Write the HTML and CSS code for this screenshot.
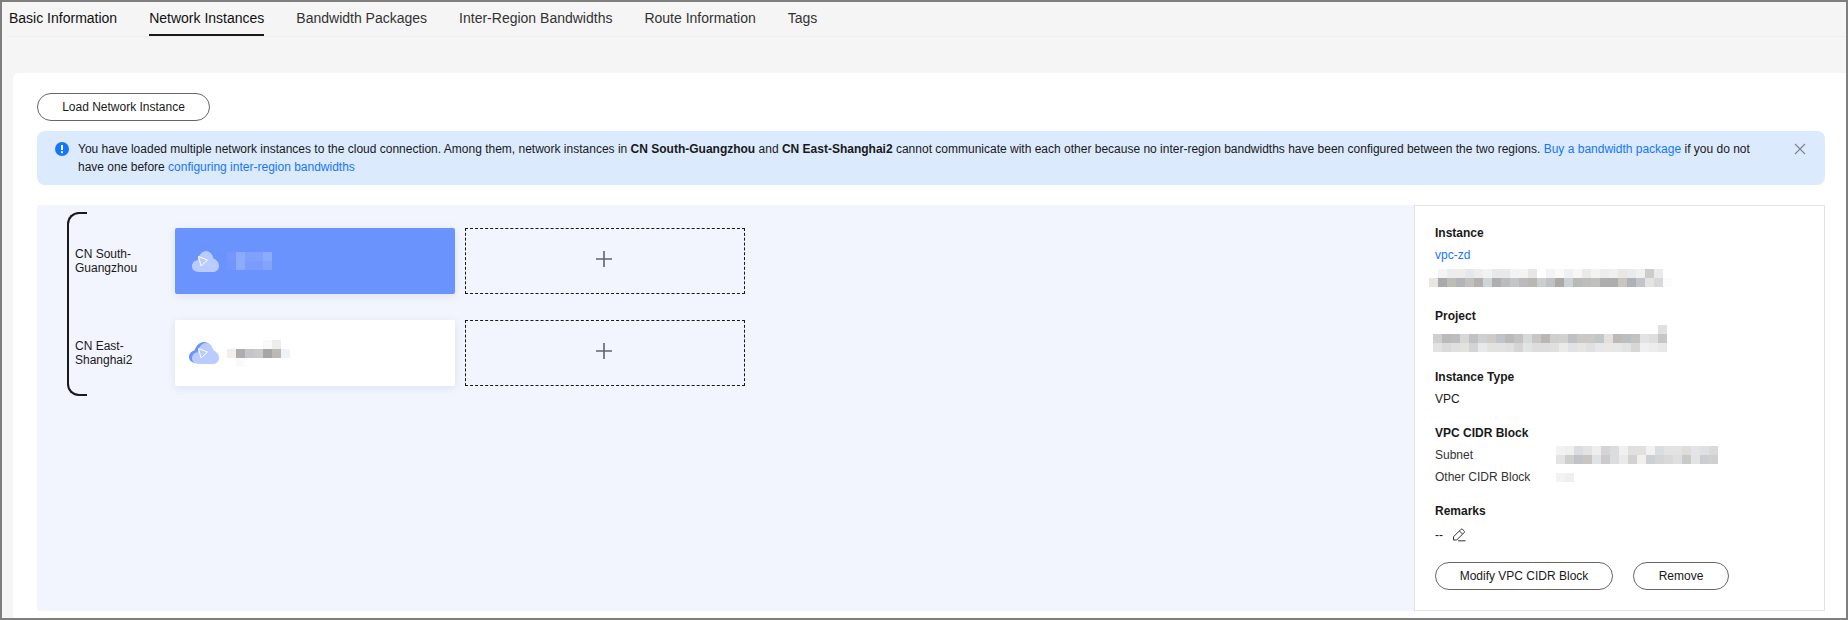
FILE: index.html
```html
<!DOCTYPE html>
<html lang="en">
<head>
<meta charset="utf-8">
<title>Cloud Connection</title>
<link rel="stylesheet" href="styles.css">
</head>
<body>
<div class="frame">
  <nav class="tabs">
    <span class="tab">Basic Information</span>
    <span class="tab active">Network Instances</span>
    <span class="tab">Bandwidth Packages</span>
    <span class="tab">Inter-Region Bandwidths</span>
    <span class="tab">Route Information</span>
    <span class="tab">Tags</span>
  </nav>
  <section class="card">
    <button class="btn btn-load">Load Network Instance</button>
    <div class="alert">
      <svg class="alert-icon" viewBox="0 0 14 14"><circle cx="7" cy="7" r="7" fill="#1476ff"/><rect x="6" y="3" width="2" height="5" fill="#fff"/><rect x="6" y="9.2" width="2" height="2" fill="#fff"/></svg>
      <p class="alert-text">You have loaded multiple network instances to the cloud connection. Among them, network instances in <b>CN South-Guangzhou</b> and <b>CN East-Shanghai2</b> cannot communicate with each other because no inter-region bandwidths have been configured between the two regions. <a class="link">Buy a bandwidth package</a> if you do not have one before <a class="link">configuring inter-region bandwidths</a></p>
      <svg class="alert-close" viewBox="0 0 12 12"><path d="M1 1l10 10M11 1L1 11" stroke="#7d8594" stroke-width="1.2" fill="none"/></svg>
    </div>
    <div class="main">
      <div class="canvas">
        <div class="regions">
          <div class="bracket"></div>
          <div class="region">
            <div class="region-name">CN South-Guangzhou</div>
            <div class="instance selected">
              <svg class="cloud" viewBox="0 0 32 22"><path fill="#b9cbff" d="M9.500 22C5.500 22 3 19.500 3 16.300 3 13 5.500 10.500 8.500 10.300 9.500 6 12.500 1 17 1c4 0 6.500 3.500 7.500 7.500 3 1 5.500 4 5.500 7.500 0 3.300-2.500 6-6 6z"/><path fill="none" stroke="#fff" stroke-width="1" d="M9.500 6.500l9 3.500-6.500 6z"/></svg>
              <svg class="mosaic" width="45" height="18" shape-rendering="crispEdges"><rect width="9" height="9" fill="#7597fd"/><rect x="9" width="9" height="9" fill="#8dabfd"/><rect x="18" width="9" height="9" fill="#80a0fd"/><rect x="27" width="9" height="9" fill="#80a0fd"/><rect x="36" width="9" height="9" fill="#8dabfd"/><rect y="9" width="9" height="9" fill="#7295fd"/><rect x="9" y="9" width="9" height="9" fill="#8dabfd"/><rect x="18" y="9" width="9" height="9" fill="#7c9cfd"/><rect x="27" y="9" width="9" height="9" fill="#7c9cfd"/><rect x="36" y="9" width="9" height="9" fill="#84a3fd"/></svg>
            </div>
            <div class="add"><svg class="plus" viewBox="0 0 16 16"><path d="M8 0v16M0 8h16" stroke="#5f6270" stroke-width="1.600" fill="none"/></svg></div>
          </div>
          <div class="region">
            <div class="region-name">CN East-Shanghai2</div>
            <div class="instance">
              <svg class="cloud" viewBox="0 0 32 22"><path fill="#6d93fb" d="M7 21C3 21 0 18.500 0 15c0-3.300 2.500-6 5.500-6.500C7 4 10.500 0 15 0c4 0 7 3 8 7H20L8 21z"/><path fill="#b9cbff" d="M9.500 22C5.500 22 3 19.500 3 16.300 3 13 5.500 10.500 8.500 10.300 9.500 6 12.500 1 17 1c4 0 6.500 3.500 7.500 7.500 3 1 5.500 4 5.500 7.500 0 3.300-2.500 6-6 6z"/><path fill="none" stroke="#fff" stroke-width="1" d="M9.500 6.500l9 3.500-6.500 6z"/></svg>
              <svg class="mosaic" width="63" height="27" shape-rendering="crispEdges"><rect x="36" width="9" height="9" fill="#f9f9f9"/><rect x="45" width="9" height="9" fill="#ececec"/><rect y="9" width="9" height="9" fill="#f2efeb"/><rect x="9" y="9" width="9" height="9" fill="#adadad"/><rect x="18" y="9" width="9" height="9" fill="#c4c5c9"/><rect x="27" y="9" width="9" height="9" fill="#c8c9cb"/><rect x="36" y="9" width="9" height="9" fill="#a7a6a4"/><rect x="45" y="9" width="9" height="9" fill="#bcb8b4"/><rect x="54" y="9" width="9" height="9" fill="#eff2f7"/><rect x="9" y="18" width="9" height="9" fill="#fafafa"/></svg>
            </div>
            <div class="add"><svg class="plus" viewBox="0 0 16 16"><path d="M8 0v16M0 8h16" stroke="#5f6270" stroke-width="1.600" fill="none"/></svg></div>
          </div>
        </div>
      </div>
      <aside class="panel">
        <h4 class="label">Instance</h4>
        <a class="link value-link">vpc-zd</a>
        <svg class="mosaic mosaic-id" width="243" height="18" shape-rendering="crispEdges"><g id="a"><rect x="9" width="9" height="9" fill="#f4f4f4"/><rect x="18" width="9" height="9" fill="#ebeceb"/><rect x="27" width="9" height="9" fill="#efedeb"/><rect x="36" width="9" height="9" fill="#e6e7e9"/><rect x="45" width="9" height="9" fill="#ededed"/><rect x="54" width="9" height="9" fill="#f2f3f1"/><rect x="63" width="9" height="9" fill="#e6e8ea"/><rect x="72" width="9" height="9" fill="#e8e9e9"/><rect x="81" width="9" height="9" fill="#f3f3f3"/><rect x="90" width="9" height="9" fill="#f5f4f2"/><rect x="99" width="9" height="9" fill="#e7e7e7"/><rect x="117" width="9" height="9" fill="#f3f3f3"/><rect x="126" width="9" height="9" fill="#faf9f7"/><rect x="135" width="9" height="9" fill="#eef0f2"/><rect x="144" width="9" height="9" fill="#f8f7f5"/><rect x="153" width="9" height="9" fill="#e9e9e9"/><rect x="162" width="9" height="9" fill="#f3f3f3"/><rect x="171" width="9" height="9" fill="#ececec"/><rect x="180" width="9" height="9" fill="#f0f0f0"/><rect x="189" width="9" height="9" fill="#e9e7e5"/><rect x="198" width="9" height="9" fill="#e9ebee"/><rect x="207" width="9" height="9" fill="#f0f0ee"/><rect x="216" width="9" height="9" fill="#cccccc"/><rect x="225" width="9" height="9" fill="#e8eaec"/></g><g><rect y="9" width="9" height="9" fill="#e9e5e1"/><rect x="9" y="9" width="9" height="9" fill="#a9a9ab"/><rect x="18" y="9" width="9" height="9" fill="#bdbdb8"/><rect x="27" y="9" width="9" height="9" fill="#b3b3ba"/><rect x="36" y="9" width="9" height="9" fill="#c0c0bd"/><rect x="45" y="9" width="9" height="9" fill="#b3b1ae"/><rect x="54" y="9" width="9" height="9" fill="#cfd4d6"/><rect x="63" y="9" width="9" height="9" fill="#aeaeb0"/><rect x="72" y="9" width="9" height="9" fill="#bbbbbd"/><rect x="81" y="9" width="9" height="9" fill="#c3c5c6"/><rect x="90" y="9" width="9" height="9" fill="#bababa"/><rect x="99" y="9" width="9" height="9" fill="#bab6b2"/><rect x="108" y="9" width="9" height="9" fill="#c9cecf"/><rect x="117" y="9" width="9" height="9" fill="#c0c1c5"/><rect x="126" y="9" width="9" height="9" fill="#acaaa7"/><rect x="135" y="9" width="9" height="9" fill="#ccd1d4"/><rect x="144" y="9" width="9" height="9" fill="#b9b9b7"/><rect x="153" y="9" width="9" height="9" fill="#bdbdbb"/><rect x="162" y="9" width="9" height="9" fill="#c0c1bf"/><rect x="171" y="9" width="9" height="9" fill="#adadad"/><rect x="180" y="9" width="9" height="9" fill="#adadad"/><rect x="189" y="9" width="9" height="9" fill="#c9c4c0"/><rect x="198" y="9" width="9" height="9" fill="#adb2b6"/><rect x="207" y="9" width="9" height="9" fill="#c3c3c9"/><rect x="216" y="9" width="9" height="9" fill="#e6e4e2"/><rect x="225" y="9" width="9" height="9" fill="#d8d8da"/><rect x="234" y="9" width="9" height="9" fill="#fbfbfb"/></g></svg>
        <h4 class="label label-project">Project</h4>
        <svg class="mosaic mosaic-project" width="234" height="27" shape-rendering="crispEdges"><rect x="225" width="9" height="9" fill="#e0e0e0"/><rect y="9" width="9" height="9" fill="#cfcfcf"/><rect x="9" y="9" width="9" height="9" fill="#bababa"/><rect x="18" y="9" width="9" height="9" fill="#bdbdbd"/><rect x="27" y="9" width="9" height="9" fill="#d7d7d7"/><rect x="36" y="9" width="9" height="9" fill="#bfc1c3"/><rect x="45" y="9" width="9" height="9" fill="#d0d0d2"/><rect x="54" y="9" width="9" height="9" fill="#cfcbc8"/><rect x="63" y="9" width="9" height="9" fill="#c0c4c9"/><rect x="72" y="9" width="9" height="9" fill="#bababa"/><rect x="81" y="9" width="9" height="9" fill="#c3c3c3"/><rect x="90" y="9" width="9" height="9" fill="#d8d9db"/><rect x="99" y="9" width="9" height="9" fill="#c9c7c5"/><rect x="108" y="9" width="9" height="9" fill="#b9b6b4"/><rect x="117" y="9" width="9" height="9" fill="#cfcfcd"/><rect x="126" y="9" width="9" height="9" fill="#d1d1d1"/><rect x="135" y="9" width="9" height="9" fill="#bfc0c6"/><rect x="144" y="9" width="9" height="9" fill="#c9c8c4"/><rect x="153" y="9" width="9" height="9" fill="#cac9c7"/><rect x="162" y="9" width="9" height="9" fill="#c1c6c9"/><rect x="171" y="9" width="9" height="9" fill="#e3e1df"/><rect x="180" y="9" width="9" height="9" fill="#bcb9b7"/><rect x="189" y="9" width="9" height="9" fill="#bbbfc2"/><rect x="198" y="9" width="9" height="9" fill="#c3c3c1"/><rect x="207" y="9" width="9" height="9" fill="#e3e3e5"/><rect x="216" y="9" width="9" height="9" fill="#dedede"/><rect x="225" y="9" width="9" height="9" fill="#c6c6c6"/><rect y="18" width="9" height="9" fill="#e2e2e2"/><rect x="9" y="18" width="9" height="9" fill="#dadada"/><rect x="18" y="18" width="9" height="9" fill="#e0e0e0"/><rect x="27" y="18" width="9" height="9" fill="#e3e2de"/><rect x="36" y="18" width="9" height="9" fill="#d4d4d6"/><rect x="45" y="18" width="9" height="9" fill="#e8e9eb"/><rect x="54" y="18" width="9" height="9" fill="#e3e2e0"/><rect x="63" y="18" width="9" height="9" fill="#e2e2e2"/><rect x="72" y="18" width="9" height="9" fill="#e0e0e0"/><rect x="81" y="18" width="9" height="9" fill="#d5d5d5"/><rect x="90" y="18" width="9" height="9" fill="#e2e3e3"/><rect x="99" y="18" width="9" height="9" fill="#dddddd"/><rect x="108" y="18" width="9" height="9" fill="#dddddd"/><rect x="117" y="18" width="9" height="9" fill="#dfdfdd"/><rect x="126" y="18" width="9" height="9" fill="#ebebe9"/><rect x="135" y="18" width="9" height="9" fill="#e0e2e7"/><rect x="144" y="18" width="9" height="9" fill="#e6e5e3"/><rect x="153" y="18" width="9" height="9" fill="#dfe0e2"/><rect x="162" y="18" width="9" height="9" fill="#e7e7e9"/><rect x="171" y="18" width="9" height="9" fill="#ebe7e4"/><rect x="180" y="18" width="9" height="9" fill="#e6e7e9"/><rect x="189" y="18" width="9" height="9" fill="#e1e2e2"/><rect x="198" y="18" width="9" height="9" fill="#d7d7d7"/><rect x="207" y="18" width="9" height="9" fill="#f0f0f2"/><rect x="216" y="18" width="9" height="9" fill="#eeecea"/><rect x="225" y="18" width="9" height="9" fill="#e8e8e8"/></svg>
        <h4 class="label label-type">Instance Type</h4>
        <div class="value">VPC</div>
        <h4 class="label label-cidr">VPC CIDR Block</h4>
        <div class="kv">
          <span class="kv-key">Subnet</span>
          <svg class="mosaic" width="162" height="18" shape-rendering="crispEdges"><rect width="9" height="9" fill="#f2f2f2"/><rect x="9" width="9" height="9" fill="#efefec"/><rect x="18" width="9" height="9" fill="#d9dce0"/><rect x="27" width="9" height="9" fill="#e3e3e3"/><rect x="36" width="9" height="9" fill="#eeeeee"/><rect x="45" width="9" height="9" fill="#d5d3d3"/><rect x="54" width="9" height="9" fill="#dadcdd"/><rect x="63" width="9" height="9" fill="#f0f0f0"/><rect x="72" width="9" height="9" fill="#e2dfdf"/><rect x="81" width="9" height="9" fill="#e2e0df"/><rect x="90" width="9" height="9" fill="#f2f2f2"/><rect x="99" width="9" height="9" fill="#d8dde0"/><rect x="108" width="9" height="9" fill="#e3e3e3"/><rect x="117" width="9" height="9" fill="#e3e3e3"/><rect x="126" width="9" height="9" fill="#e0dcda"/><rect x="135" width="9" height="9" fill="#e3e4e8"/><rect x="144" width="9" height="9" fill="#dfe0e4"/><rect x="153" width="9" height="9" fill="#d9dadc"/><rect y="9" width="9" height="9" fill="#e3e3e3"/><rect x="9" y="9" width="9" height="9" fill="#cfcfcf"/><rect x="18" y="9" width="9" height="9" fill="#c2c3c9"/><rect x="27" y="9" width="9" height="9" fill="#c9c5c2"/><rect x="36" y="9" width="9" height="9" fill="#dfe3e5"/><rect x="45" y="9" width="9" height="9" fill="#cbcbcb"/><rect x="54" y="9" width="9" height="9" fill="#dbdcdd"/><rect x="63" y="9" width="9" height="9" fill="#eaeaea"/><rect x="72" y="9" width="9" height="9" fill="#d2d2d2"/><rect x="81" y="9" width="9" height="9" fill="#f2f0ee"/><rect x="90" y="9" width="9" height="9" fill="#ccd0d5"/><rect x="99" y="9" width="9" height="9" fill="#d5d5d5"/><rect x="108" y="9" width="9" height="9" fill="#d9d9d9"/><rect x="117" y="9" width="9" height="9" fill="#dedfe0"/><rect x="126" y="9" width="9" height="9" fill="#c9c9c9"/><rect x="135" y="9" width="9" height="9" fill="#e3e3e3"/><rect x="144" y="9" width="9" height="9" fill="#cccdd0"/><rect x="153" y="9" width="9" height="9" fill="#d0d0d0"/></svg>
        </div>
        <div class="kv">
          <span class="kv-key">Other CIDR Block</span>
          <svg class="mosaic" width="18" height="9" shape-rendering="crispEdges"><rect width="9" height="9" fill="#f3f3f3"/><rect x="9" width="9" height="9" fill="#efefef"/></svg>
        </div>
        <h4 class="label label-remarks">Remarks</h4>
        <div class="value remark-row">--
          <svg class="pencil" viewBox="0 0 14 14"><path d="M1.500 8.800L8.800 1.500a1.300 1.300 0 0 1 1.900 0l1.300 1.300a1.300 1.300 0 0 1 0 1.900L4.700 12H1.500z M7.500 3l3 3 M6 12.800h7.500" fill="none" stroke="#333" stroke-width="1"/></svg>
        </div>
        <div class="actions">
          <button class="btn btn-modify">Modify VPC CIDR Block</button>
          <button class="btn btn-remove">Remove</button>
        </div>
      </aside>
    </div>
  </section>
</div>
</body>
</html>
```
FILE: styles.css
```css
* { box-sizing: border-box; }
html, body { margin: 0; padding: 0; }
body { width: 1848px; height: 620px; overflow: hidden; font-family: "Liberation Sans", Arial, sans-serif; font-size: 12px; color: #191919; }
.frame { width: 1848px; height: 620px; border: 2px solid #7f7f7f; background: #f5f5f5; display: flex; flex-direction: column; overflow: hidden; }
.tabs { display: flex; gap: 32px; height: 35px; margin-left: 7px; border-bottom: 1px solid #eeeeee; font-size: 14px; flex: none; }
.tab { height: 32px; line-height: 32px; color: #333; }
.tab.active { color: #111; border-bottom: 2px solid #191919; height: 34px; }
.tab:first-child { color: #111; }
.card { flex: 1; margin: 36px 0 0 11px; background: #fff; border-top-left-radius: 6px; padding: 20px 21px 7px 24px; display: flex; flex-direction: column; min-height: 0; }
.btn { font: inherit; color: #191919; background: #fff; border: 1px solid #666; border-radius: 14px; height: 28px; padding: 0; display: block; }
.btn-load { width: 173px; flex: none; }
.alert { margin-top: 10px; height: 54px; flex: none; background: #dceafe; border-radius: 8px; padding: 9px 19px 0 18px; display: flex; align-items: flex-start; }
.alert-icon { width: 14px; height: 14px; flex: none; margin: 2px 9px 0 0; }
.alert-text { margin: 0; flex: 1; line-height: 18px; }
.alert-close { width: 12px; height: 12px; flex: none; margin: 3px 0 0 26px; }
.link { color: #1476ff; text-decoration: none; }
.main { margin-top: 20px; flex: 1; display: flex; min-height: 0; }
.canvas { flex: 1; background: #f2f5fd; padding: 7px 0 0 30px; }
.regions { position: relative; width: 678px; height: 184px; padding: 16px 0 0 8px; display: flex; flex-direction: column; gap: 26px; }
.bracket { position: absolute; left: 0; top: 0; width: 20px; height: 184px; border: 2px solid #191919; border-right: none; border-radius: 12px 0 0 12px; }
.region { display: flex; align-items: stretch; gap: 10px; height: 66px; }
.region-name { width: 90px; align-self: center; line-height: 14px; padding-right: 18px; }
.instance { width: 280px; background: #fff; border-radius: 2px; box-shadow: 0 2px 8px rgba(90, 110, 190, .14); display: flex; align-items: center; padding-left: 14px; }
.instance.selected { background: #6b93fd; }
.cloud { width: 32px; height: 22px; flex: none; margin-right: 6px; }
.mosaic { display: block; flex: none; }
.add { width: 280px; border: 1px dashed #191919; display: flex; align-items: center; justify-content: center; padding: 0 3px 4px 0; }
.plus { width: 16px; height: 16px; }
.panel { width: 411px; flex: none; background: #fff; border: 1px solid #e3e3e3; padding: 17px 20px 0; }
.label { margin: 0; font-size: 12px; font-weight: 700; line-height: 20px; color: #191919; }
.value-link { display: block; line-height: 20px; margin-top: 2px; }
.mosaic-id { margin: 4px 0 0 -6px; }
.label-project { margin-top: 19px; }
.mosaic-project { margin: -1px 0 0 -2px; }
.label-type { margin-top: 15px; }
.value { line-height: 20px; margin-top: 2px; }
.label-cidr { margin-top: 14px; }
.kv { display: flex; align-items: center; height: 22px; color: #333; }
.label-cidr + .kv { margin-top: 1px; }
.kv-key { width: 121px; flex: none; }
.label-remarks { margin-top: 13px; }
.remark-row { display: flex; align-items: center; gap: 9px; margin-top: 4px; }
.pencil { width: 14px; height: 14px; }
.actions { display: flex; gap: 20px; margin-top: 17px; }
.btn-modify { width: 178px; }
.btn-remove { width: 96px; }
```
